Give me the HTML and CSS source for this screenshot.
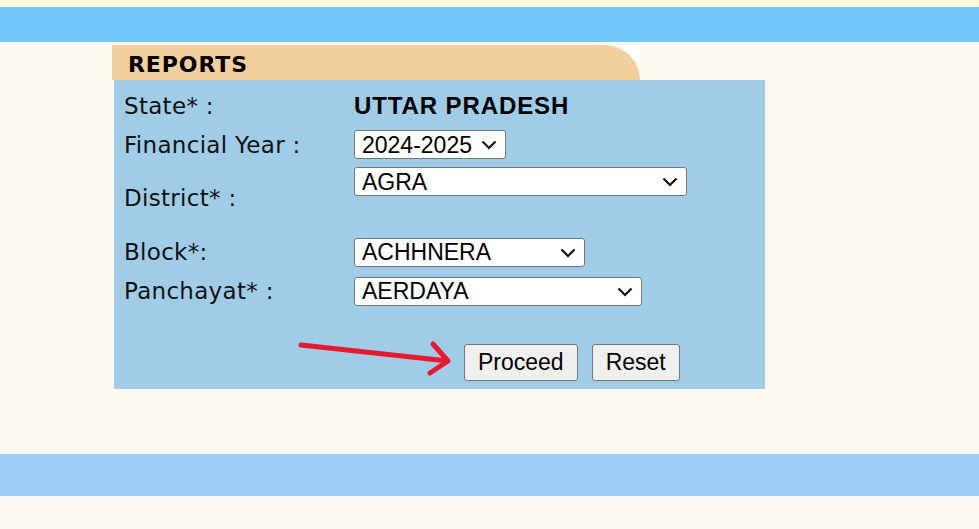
FILE: index.html
```html
<!DOCTYPE html>
<html lang="en">
<head>
    <meta charset="UTF-8">
    <meta name="viewport" content="width=device-width, initial-scale=1.0">
    <title>Reports</title>
    <link rel="stylesheet" href="styles.css">
</head>
<body>
    <!-- Header bands -->
    <div class="topstrip"></div>
    <div class="topband"></div>

    <div class="wrap">
        <!-- Tab -->
        <div class="tab">
            <div class="tab-title">REPORTS</div>
            <div class="tab-corner"><div class="tab-curve"></div></div>
        </div>

        <!-- Report form -->
        <div class="panel">
            <div class="row row-state">
                <label>State* :</label>
                <span class="state-name">UTTAR PRADESH</span>
            </div>
            <div class="row row-year">
                <label for="year">Financial Year :</label>
                <span class="select-wrap sel-year">
                    <select id="year">
                        <option>2024-2025</option>
                        <option>2023-2024</option>
                    </select>
                    <svg class="chev" width="16" height="10" viewBox="0 0 16 10"><path d="M1.5 1.5 L8 8 L14.5 1.5" fill="none" stroke="#111" stroke-width="2.2"/></svg>
                </span>
            </div>
            <div class="row row-district">
                <label for="district">District* :</label>
                <span class="select-wrap sel-district">
                    <select id="district">
                        <option>AGRA</option>
                    </select>
                    <svg class="chev" width="16" height="10" viewBox="0 0 16 10"><path d="M1.5 1.5 L8 8 L14.5 1.5" fill="none" stroke="#111" stroke-width="2.2"/></svg>
                </span>
            </div>
            <div class="row row-block">
                <label for="block">Block*:</label>
                <span class="select-wrap sel-block">
                    <select id="block">
                        <option>ACHHNERA</option>
                    </select>
                    <svg class="chev" width="16" height="10" viewBox="0 0 16 10"><path d="M1.5 1.5 L8 8 L14.5 1.5" fill="none" stroke="#111" stroke-width="2.2"/></svg>
                </span>
            </div>
            <div class="row row-panchayat">
                <label for="panchayat">Panchayat* :</label>
                <span class="select-wrap sel-panchayat">
                    <select id="panchayat">
                        <option>AERDAYA</option>
                    </select>
                    <svg class="chev" width="16" height="10" viewBox="0 0 16 10"><path d="M1.5 1.5 L8 8 L14.5 1.5" fill="none" stroke="#111" stroke-width="2.2"/></svg>
                </span>
            </div>
            <div class="actions">
                <svg class="arrow" width="160" height="40" viewBox="0 0 160 40">
                    <path d="M3 7 L150 23 M135 6 L150 23 L132 35" fill="none" stroke="#e6192e" stroke-width="5" stroke-linecap="round" stroke-linejoin="round"/>
                </svg>
                <button class="btn">Proceed</button>
                <button class="btn">Reset</button>
            </div>
        </div>
    </div>

    <div class="bottomband"></div>
</body>
</html>
```

FILE: styles.css
```css
/* Basic Reset */
* {
    margin: 0;
    padding: 0;
    box-sizing: border-box;
}

body {
    background-color: #fefaf1;
    font-family: "DejaVu Sans", Verdana, sans-serif;
}

/* Header and footer bands */
.topstrip {
    height: 7px;
    background-color: #fffcdc;
}

.topband {
    height: 35px;
    background-color: #72c8fa;
}

.bottomband {
    height: 42px;
    margin-top: 65px;
    background-color: #a0cdf6;
}

.wrap {
    margin-left: 112px;
    padding-top: 3px;
}

/* Tab */
.tab {
    display: flex;
    width: 528px;
    height: 35px;
}

.tab-title {
    flex: 1;
    background-color: #f3cfa0;
    font-weight: bold;
    font-size: 22px;
    letter-spacing: 0.9px;
    line-height: 39px;
    padding-left: 16px;
    color: #000;
}

.tab-corner {
    width: 35px;
    background-color: #fff;
}

.tab-curve {
    height: 100%;
    background-color: #f3cfa0;
    border-top-right-radius: 35px 35px;
}

/* Panel */
.panel {
    width: 651px;
    margin-left: 2px;
    background-color: #a0cce8;
    padding: 6px 0 8px 10px;
}

.row {
    display: grid;
    grid-template-columns: 230px 1fr;
    align-items: center;
}

.row label {
    font-size: 23px;
    letter-spacing: 0.3px;
    color: #111;
}

.row-state { height: 40px; }
.row-year { height: 37px; }
.row-district { height: 70px; }
.row-block { height: 38px; }
.row-panchayat { height: 40px; }

.row-district .select-wrap {
    align-self: start;
    margin-top: 4px;
}

.state-name {
    font-family: "Liberation Sans", Arial, sans-serif;
    font-weight: bold;
    font-size: 24px;
    letter-spacing: 0.9px;
    color: #000;
}

/* Selects with drawn chevron */
.select-wrap {
    position: relative;
    display: block;
    height: 29px;
}

.select-wrap select {
    appearance: none;
    -webkit-appearance: none;
    width: 100%;
    height: 29px;
    font-family: "Liberation Sans", Arial, sans-serif;
    font-size: 23px;
    padding: 0 30px 0 7px;
    border: 1px solid #767676;
    border-radius: 3px;
    background-color: #fff;
    color: #000;
}

.chev {
    position: absolute;
    right: 9px;
    top: 10px;
    pointer-events: none;
}

.sel-year { width: 152px; }
.sel-district { width: 333px; }
.sel-block { width: 231px; }
.sel-panchayat { width: 288px; }

/* Buttons */
.actions {
    display: flex;
    align-items: flex-end;
    height: 70px;
    padding-left: 174px;
}

.arrow {
    margin-bottom: 3px;
    margin-right: 6px;
}

.btn {
    font-family: "Liberation Sans", Arial, sans-serif;
    font-size: 23px;
    height: 37px;
    padding: 0 13px;
    margin-right: 14px;
    background-color: #efefef;
    border: 1px solid #767676;
    border-radius: 3px;
    color: #000;
}
```
